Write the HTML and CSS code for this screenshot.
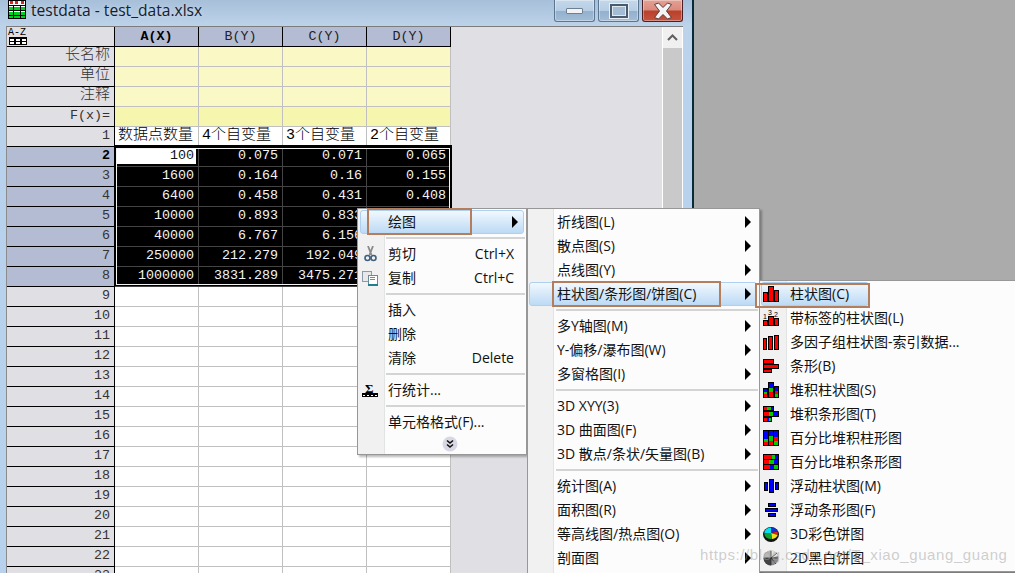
FILE: index.html
```html
<!DOCTYPE html>
<html lang="zh">
<head>
<meta charset="utf-8">
<title>testdata - test_data.xlsx</title>
<link rel="stylesheet" href="styles.css">
</head>
<body>
<div class="desktop">
  <div class="window">
    <header class="titlebar">
      <svg class="app-icon" width="20" height="20" viewBox="0 0 20 20" shape-rendering="crispEdges">
        <rect x="1" y="0" width="18" height="19" fill="#000"/>
        <rect x="2" y="1" width="16" height="17" fill="#fff"/>
        <rect x="3" y="1" width="3" height="3" fill="#e02020"/><rect x="8" y="1" width="3" height="3" fill="#e02020"/><rect x="14" y="1" width="3" height="3" fill="#e02020"/>
        <rect x="2" y="5" width="16" height="1" fill="#000"/>
        <rect x="2" y="7" width="16" height="3" fill="#00d020"/>
        <rect x="2" y="12" width="16" height="3" fill="#00d020"/>
        <rect x="2" y="16" width="16" height="2" fill="#00d020"/>
        <rect x="6" y="6" width="1" height="12" fill="#000"/><rect x="13" y="6" width="1" height="12" fill="#000"/>
        <rect x="2" y="10" width="16" height="1" fill="#000"/><rect x="2" y="15" width="16" height="1" fill="#000"/>
      </svg>
      <span class="title-text">testdata - test_data.xlsx</span>
      <div class="win-buttons">
        <div class="win-btn"><span class="glyph-min"></span></div>
        <div class="win-btn"><span class="glyph-max"></span></div>
        <div class="win-btn win-close">
          <svg width="20" height="18" viewBox="0 0 20 18"><path d="M1.500 2.500 L5.500 1 L10 5.500 L14.500 1 L18.500 2.500 L13.500 9 L18.500 15.500 L14.500 17 L10 12.500 L5.500 17 L1.500 15.500 L6.500 9 Z" fill="#f4f4f4" stroke="#5a3a3a" stroke-width="1"/></svg>
        </div>
      </div>
    </header>
    <main class="client">
      <div class="sheet">
        <div class="grid">
          <div class="cell col corner">
            <svg width="20" height="18" viewBox="0 0 20 18" shape-rendering="crispEdges">
              <text x="0" y="7" class="corner-text">A-Z</text>
              <rect x="1" y="9" width="18" height="8" fill="#000"/>
              <rect x="2" y="11" width="4" height="2" fill="#fff"/><rect x="8" y="11" width="4" height="2" fill="#fff"/><rect x="14" y="11" width="4" height="2" fill="#fff"/>
              <rect x="2" y="14" width="4" height="2" fill="#fff"/><rect x="8" y="14" width="4" height="2" fill="#fff"/><rect x="14" y="14" width="4" height="2" fill="#fff"/>
            </svg>
          </div>
          <div class="cell col bold">A(X)</div><div class="cell col">B(Y)</div><div class="cell col">C(Y)</div><div class="cell col">D(Y)</div>

          <div class="cell rh cjk">长名称</div><div class="cell yl"></div><div class="cell yl"></div><div class="cell yl"></div><div class="cell yl"></div>
          <div class="cell rh cjk">单位</div><div class="cell yl"></div><div class="cell yl"></div><div class="cell yl"></div><div class="cell yl"></div>
          <div class="cell rh cjk">注释</div><div class="cell yl"></div><div class="cell yl"></div><div class="cell yl"></div><div class="cell yl"></div>
          <div class="cell rh">F(x)=</div><div class="cell yl2"></div><div class="cell yl2"></div><div class="cell yl2"></div><div class="cell yl2"></div>
          <div class="cell rh">1</div><div class="cell wh cjk">数据点数量</div><div class="cell wh cjk">4个自变量</div><div class="cell wh cjk">3个自变量</div><div class="cell wh cjk">2个自变量</div>

          <div class="cell rh sel bold">2</div><div class="cell bk active">100</div><div class="cell bk">0.075</div><div class="cell bk">0.071</div><div class="cell bk">0.065</div>
          <div class="cell rh sel">3</div><div class="cell bk">1600</div><div class="cell bk">0.164</div><div class="cell bk">0.16</div><div class="cell bk">0.155</div>
          <div class="cell rh sel">4</div><div class="cell bk">6400</div><div class="cell bk">0.458</div><div class="cell bk">0.431</div><div class="cell bk">0.408</div>
          <div class="cell rh sel">5</div><div class="cell bk">10000</div><div class="cell bk">0.893</div><div class="cell bk">0.833</div><div class="cell bk"></div>
          <div class="cell rh sel">6</div><div class="cell bk">40000</div><div class="cell bk">6.767</div><div class="cell bk">6.156</div><div class="cell bk"></div>
          <div class="cell rh sel">7</div><div class="cell bk">250000</div><div class="cell bk">212.279</div><div class="cell bk">192.049</div><div class="cell bk"></div>
          <div class="cell rh sel">8</div><div class="cell bk">1000000</div><div class="cell bk">3831.289</div><div class="cell bk">3475.271</div><div class="cell bk"></div>

          <div class="cell rh">9</div><div class="cell wh"></div><div class="cell wh"></div><div class="cell wh"></div><div class="cell wh"></div>
          <div class="cell rh">10</div><div class="cell wh"></div><div class="cell wh"></div><div class="cell wh"></div><div class="cell wh"></div>
          <div class="cell rh">11</div><div class="cell wh"></div><div class="cell wh"></div><div class="cell wh"></div><div class="cell wh"></div>
          <div class="cell rh">12</div><div class="cell wh"></div><div class="cell wh"></div><div class="cell wh"></div><div class="cell wh"></div>
          <div class="cell rh">13</div><div class="cell wh"></div><div class="cell wh"></div><div class="cell wh"></div><div class="cell wh"></div>
          <div class="cell rh">14</div><div class="cell wh"></div><div class="cell wh"></div><div class="cell wh"></div><div class="cell wh"></div>
          <div class="cell rh">15</div><div class="cell wh"></div><div class="cell wh"></div><div class="cell wh"></div><div class="cell wh"></div>
          <div class="cell rh">16</div><div class="cell wh"></div><div class="cell wh"></div><div class="cell wh"></div><div class="cell wh"></div>
          <div class="cell rh">17</div><div class="cell wh"></div><div class="cell wh"></div><div class="cell wh"></div><div class="cell wh"></div>
          <div class="cell rh">18</div><div class="cell wh"></div><div class="cell wh"></div><div class="cell wh"></div><div class="cell wh"></div>
          <div class="cell rh">19</div><div class="cell wh"></div><div class="cell wh"></div><div class="cell wh"></div><div class="cell wh"></div>
          <div class="cell rh">20</div><div class="cell wh"></div><div class="cell wh"></div><div class="cell wh"></div><div class="cell wh"></div>
          <div class="cell rh">21</div><div class="cell wh"></div><div class="cell wh"></div><div class="cell wh"></div><div class="cell wh"></div>
          <div class="cell rh">22</div><div class="cell wh"></div><div class="cell wh"></div><div class="cell wh"></div><div class="cell wh"></div>
          <div class="cell rh">23</div><div class="cell wh"></div><div class="cell wh"></div><div class="cell wh"></div><div class="cell wh"></div>

          <div class="selection"></div>
        </div>
      </div>
      <div class="scrollbar">
        <div class="scroll-btn">
          <svg width="11" height="7" viewBox="0 0 11 7"><path d="M1 6 L5.500 1.500 L10 6" fill="none" stroke="#5f5f5f" stroke-width="2"/></svg>
        </div>
      </div>
    </main>
  </div>

  <!-- context menu -->
  <nav class="menu menu-a">
    <div class="item hot"><span class="icon"></span><span>绘图</span><span class="arrow"></span></div>
    <div class="sep"></div>
    <div class="item"><span class="icon">
      <svg width="16" height="16" viewBox="0 0 16 16"><path d="M6 0 L9.500 9 M11 0 L7.500 9" stroke="#8a8a8a" stroke-width="1.800" fill="none"/><circle cx="5.500" cy="12" r="2.500" fill="none" stroke="#3f5f7f" stroke-width="1.600"/><circle cx="11.500" cy="12" r="2.500" fill="none" stroke="#3f5f7f" stroke-width="1.600"/></svg>
    </span><span>剪切</span><span class="key">Ctrl+X</span></div>
    <div class="item"><span class="icon">
      <svg width="16" height="16" viewBox="0 0 16 16" shape-rendering="crispEdges"><rect x="0" y="1" width="9" height="10" fill="#e8e8e8" stroke="#8a9aa8"/><rect x="6" y="5" width="9" height="10" fill="#fff" stroke="#6a8a98"/><rect x="8" y="7" width="5" height="1" fill="#7a8a98"/><rect x="8" y="9" width="5" height="1" fill="#7a8a98"/><rect x="6" y="14" width="10" height="2" fill="#1f7f8f"/></svg>
    </span><span>复制</span><span class="key">Ctrl+C</span></div>
    <div class="sep"></div>
    <div class="item"><span class="icon"></span><span>插入</span></div>
    <div class="item"><span class="icon"></span><span>删除</span></div>
    <div class="item"><span class="icon"></span><span>清除</span><span class="key">Delete</span></div>
    <div class="sep"></div>
    <div class="item"><span class="icon">
      <svg width="16" height="16" viewBox="0 0 16 16" shape-rendering="crispEdges"><text x="3" y="11" class="sigma">Σ</text><rect x="0" y="11" width="16" height="1" fill="#000"/><rect x="0" y="12" width="16" height="3" fill="#000"/><rect x="1" y="13" width="2" height="1" fill="#fff"/><rect x="5" y="13" width="2" height="1" fill="#fff"/><rect x="9" y="13" width="2" height="1" fill="#fff"/><rect x="13" y="13" width="2" height="1" fill="#fff"/></svg>
    </span><span>行统计...</span></div>
    <div class="sep"></div>
    <div class="item"><span class="icon"></span><span>单元格格式(F)...</span></div>
    <div class="more">
      <svg width="16" height="16" viewBox="0 0 16 16"><circle cx="8" cy="8" r="7.500" fill="#d8d8e4"/><path d="M5 4.500 L8 7 L11 4.500 M5 8.500 L8 11 L11 8.500" fill="none" stroke="#111" stroke-width="1.600"/></svg>
    </div>
  </nav>

  <!-- plot submenu -->
  <nav class="menu menu-b">
    <div class="item"><span class="icon"></span><span>折线图(L)</span><span class="arrow"></span></div>
    <div class="item"><span class="icon"></span><span>散点图(S)</span><span class="arrow"></span></div>
    <div class="item"><span class="icon"></span><span>点线图(Y)</span><span class="arrow"></span></div>
    <div class="item hot"><span class="icon"></span><span>柱状图/条形图/饼图(C)</span><span class="arrow"></span></div>
    <div class="sep"></div>
    <div class="item"><span class="icon"></span><span>多Y轴图(M)</span><span class="arrow"></span></div>
    <div class="item"><span class="icon"></span><span>Y-偏移/瀑布图(W)</span><span class="arrow"></span></div>
    <div class="item"><span class="icon"></span><span>多窗格图(I)</span><span class="arrow"></span></div>
    <div class="sep"></div>
    <div class="item"><span class="icon"></span><span>3D XYY(3)</span><span class="arrow"></span></div>
    <div class="item"><span class="icon"></span><span>3D 曲面图(F)</span><span class="arrow"></span></div>
    <div class="item"><span class="icon"></span><span>3D 散点/条状/矢量图(B)</span><span class="arrow"></span></div>
    <div class="sep"></div>
    <div class="item"><span class="icon"></span><span>统计图(A)</span><span class="arrow"></span></div>
    <div class="item"><span class="icon"></span><span>面积图(R)</span><span class="arrow"></span></div>
    <div class="item"><span class="icon"></span><span>等高线图/热点图(O)</span><span class="arrow"></span></div>
    <div class="item"><span class="icon"></span><span>剖面图</span><span class="arrow"></span></div>
  </nav>

  <!-- column/bar submenu -->
  <nav class="menu menu-c">
    <div class="item hot hot-short"><span class="icon">
      <svg width="16" height="16" viewBox="0 0 16 16" shape-rendering="crispEdges"><rect x="0" y="6" width="5" height="10"/><rect x="5" y="0" width="6" height="16"/><rect x="11" y="4" width="5" height="12"/><rect x="1" y="7" width="3" height="8" fill="#f00"/><rect x="6" y="1" width="4" height="14" fill="#f00"/><rect x="12" y="5" width="3" height="10" fill="#f00"/></svg>
    </span><span>柱状图(C)</span></div>
    <div class="item"><span class="icon">
      <svg width="16" height="16" viewBox="0 0 16 16" shape-rendering="crispEdges"><text x="0" y="9" class="mini">1</text><text x="5" y="5" class="mini">3</text><text x="11" y="7" class="mini">2</text><rect x="0" y="10" width="5" height="6"/><rect x="5" y="6" width="6" height="10"/><rect x="11" y="8" width="5" height="8"/><rect x="1" y="11" width="3" height="4" fill="#f00"/><rect x="6" y="7" width="4" height="8" fill="#f00"/><rect x="12" y="9" width="3" height="6" fill="#f00"/></svg>
    </span><span>带标签的柱状图(L)</span></div>
    <div class="item"><span class="icon">
      <svg width="16" height="16" viewBox="0 0 16 16" shape-rendering="crispEdges"><rect x="0" y="4" width="4" height="12"/><rect x="5" y="2" width="5" height="14"/><rect x="11" y="1" width="5" height="15"/><rect x="1" y="5" width="2" height="10" fill="#f00"/><rect x="6" y="3" width="3" height="12" fill="#f00"/><rect x="12" y="2" width="3" height="13" fill="#f00"/></svg>
    </span><span>多因子组柱状图-索引数据...</span></div>
    <div class="item"><span class="icon">
      <svg width="16" height="16" viewBox="0 0 16 16" shape-rendering="crispEdges"><rect x="0" y="1" width="11" height="5"/><rect x="0" y="6" width="16" height="5"/><rect x="0" y="11" width="9" height="4"/><rect x="1" y="2" width="9" height="3" fill="#f00"/><rect x="1" y="7" width="14" height="3" fill="#f00"/><rect x="1" y="12" width="7" height="2" fill="#f00"/></svg>
    </span><span>条形(B)</span></div>
    <div class="item"><span class="icon">
      <svg width="16" height="16" viewBox="0 0 16 16" shape-rendering="crispEdges"><rect x="0" y="6" width="5" height="10"/><rect x="5" y="0" width="6" height="16"/><rect x="11" y="4" width="5" height="12"/><rect x="1" y="7" width="3" height="3" fill="#00f"/><rect x="1" y="10" width="3" height="2" fill="#0c0"/><rect x="1" y="12" width="3" height="3" fill="#f00"/><rect x="6" y="1" width="4" height="5" fill="#00f"/><rect x="6" y="6" width="4" height="4" fill="#0c0"/><rect x="6" y="10" width="4" height="5" fill="#f00"/><rect x="12" y="5" width="3" height="4" fill="#00f"/><rect x="12" y="9" width="3" height="3" fill="#f00"/><rect x="12" y="12" width="3" height="3" fill="#0c0"/></svg>
    </span><span>堆积柱状图(S)</span></div>
    <div class="item"><span class="icon">
      <svg width="16" height="16" viewBox="0 0 16 16" shape-rendering="crispEdges"><rect x="0" y="0" width="11" height="5"/><rect x="0" y="5" width="16" height="6"/><rect x="0" y="11" width="9" height="5"/><rect x="1" y="1" width="3" height="3" fill="#f00"/><rect x="4" y="1" width="4" height="3" fill="#0c0"/><rect x="8" y="1" width="2" height="3" fill="#00f"/><rect x="1" y="6" width="5" height="4" fill="#f00"/><rect x="6" y="6" width="4" height="4" fill="#0c0"/><rect x="10" y="6" width="5" height="4" fill="#00f"/><rect x="1" y="12" width="3" height="3" fill="#f00"/><rect x="4" y="12" width="2" height="3" fill="#00f"/><rect x="6" y="12" width="2" height="3" fill="#0c0"/></svg>
    </span><span>堆积条形图(T)</span></div>
    <div class="item"><span class="icon">
      <svg width="16" height="16" viewBox="0 0 16 16" shape-rendering="crispEdges"><rect x="0" y="0" width="16" height="16"/><rect x="1" y="1" width="4" height="8" fill="#00f"/><rect x="1" y="9" width="4" height="3" fill="#0c0"/><rect x="1" y="12" width="4" height="3" fill="#f00"/><rect x="6" y="1" width="4" height="5" fill="#00f"/><rect x="6" y="6" width="4" height="5" fill="#0c0"/><rect x="6" y="11" width="4" height="4" fill="#f00"/><rect x="11" y="1" width="4" height="6" fill="#00f"/><rect x="11" y="7" width="4" height="4" fill="#f00"/><rect x="11" y="11" width="4" height="4" fill="#0c0"/></svg>
    </span><span>百分比堆积柱形图</span></div>
    <div class="item"><span class="icon">
      <svg width="16" height="16" viewBox="0 0 16 16" shape-rendering="crispEdges"><rect x="0" y="0" width="16" height="16"/><rect x="1" y="1" width="8" height="4" fill="#f00"/><rect x="9" y="1" width="3" height="4" fill="#0c0"/><rect x="12" y="1" width="3" height="4" fill="#00f"/><rect x="1" y="6" width="5" height="4" fill="#f00"/><rect x="6" y="6" width="5" height="4" fill="#0c0"/><rect x="11" y="6" width="4" height="4" fill="#00f"/><rect x="1" y="11" width="6" height="4" fill="#f00"/><rect x="7" y="11" width="4" height="4" fill="#00f"/><rect x="11" y="11" width="4" height="4" fill="#0c0"/></svg>
    </span><span>百分比堆积条形图</span></div>
    <div class="item"><span class="icon">
      <svg width="16" height="16" viewBox="0 0 16 16" shape-rendering="crispEdges"><rect x="1" y="4" width="4" height="9"/><rect x="6" y="1" width="5" height="14"/><rect x="12" y="4" width="4" height="8"/><rect x="2" y="5" width="2" height="7" fill="#00f"/><rect x="7" y="2" width="3" height="12" fill="#00f"/><rect x="13" y="5" width="2" height="6" fill="#00f"/></svg>
    </span><span>浮动柱状图(M)</span></div>
    <div class="item"><span class="icon">
      <svg width="16" height="16" viewBox="0 0 16 16" shape-rendering="crispEdges"><rect x="5" y="1" width="8" height="4"/><rect x="2" y="6" width="13" height="4"/><rect x="5" y="11" width="8" height="4"/><rect x="6" y="2" width="6" height="2" fill="#00f"/><rect x="3" y="7" width="11" height="2" fill="#00f"/><rect x="6" y="12" width="6" height="2" fill="#00f"/></svg>
    </span><span>浮动条形图(F)</span></div>
    <div class="item"><span class="icon">
      <svg width="16" height="16" viewBox="0 0 16 16"><ellipse cx="8" cy="8.500" rx="8" ry="7.500" fill="#111"/><path d="M8 7 L8 1.500 A6.800 5.500 0 0 0 1.300 7.500 Z" fill="#00e0f0"/><path d="M8 7 L8 1.500 A6.800 5.500 0 0 1 14.500 5.500 Z" fill="#1030d0"/><path d="M8 7 L14.500 5.500 A6.800 5.500 0 0 1 14.700 9 Z" fill="#e02020"/><path d="M8 7 L14.700 9 A6.800 5.500 0 0 1 9 13 Z" fill="#f0e020"/><path d="M8 7 L9 13 A6.800 5.500 0 0 1 1.300 7.500 Z" fill="#10a030"/></svg>
    </span><span>3D彩色饼图</span></div>
    <div class="item"><span class="icon">
      <svg width="16" height="16" viewBox="0 0 16 16"><circle cx="8" cy="8" r="7.500" fill="#8a8a8a"/><path d="M8 8 L8 .5 A7.500 7.500 0 0 1 15 6 Z" fill="#e4e4e4"/><path d="M8 8 L.5 8 A7.500 7.500 0 0 1 8 .5 Z" fill="#b8b8b8"/><path d="M8 8 L8 15.500 A7.500 7.500 0 0 1 .5 8 Z" fill="#444"/><path d="M8 1 V15 M1 8 H15 M8 8 L14 3 M8 8 L13 14" stroke="#222" stroke-width=".7"/></svg>
    </span><span>2D黑白饼图</span></div>
  </nav>

  <div class="mark mark-a"></div>
  <div class="mark mark-b"></div>
  <div class="mark mark-c"></div>
  <div class="watermark">https://blog.csdn.net/T_xiao_guang_guang</div>
</div>
</body>
</html>
```
FILE: styles.css
```css
* { box-sizing: border-box; }
html, body { margin: 0; padding: 0; }
body { width: 1015px; height: 573px; overflow: hidden; background: #ababab; }

.desktop { position: relative; width: 1015px; height: 573px; overflow: hidden; background: #ababab; }

/* window */
.window {
  width: 694px; height: 573px;
  display: flex; flex-direction: column;
  background: linear-gradient(#a7bfd9 0, #bcd3ea 26px, #b8d2ed 120px);
  border-right: 2px solid #062c3a;
}
.titlebar { height: 26px; display: flex; align-items: flex-start; flex: none; }
.app-icon { margin: 0 0 0 7px; flex: none; }
.title-text {
  margin: 0 0 0 4px;
  font: 15.6px/20px "Open Sans", "Liberation Sans", sans-serif;
  color: #15202c;
  text-shadow: 0 0 5px rgba(255,255,255,.45);
}
.win-buttons { margin-left: auto; margin-right: 9px; display: flex; gap: 3px; }
.win-btn {
  width: 41px; height: 22px;
  display: flex; align-items: center; justify-content: center;
  border: 1px solid #5d7690; border-top: 0; border-radius: 0 0 3px 3px;
  background: linear-gradient(#c5d8eb 0, #b5cde4 50%, #92afcc 52%, #a3bdd7 100%);
  box-shadow: inset 0 0 0 1px rgba(255,255,255,.35);
}
.win-close {
  border-color: #4b1f26;
  background: linear-gradient(#e5a094 0, #d98a7c 48%, #b9402a 52%, #c5533f 100%);
}
.glyph-min { width: 17px; height: 6px; margin-top: 1px; border-radius: 1px; background: #f2f2f2; border: 1px solid #6f7f92; }
.glyph-max { width: 18px; height: 14px; border: 2px solid #4a5a6e; box-shadow: 0 0 0 1px #e8eef4, inset 0 0 0 1px #dfe7ef; background: #a3bbd3; }

.client {
  flex: 1; min-height: 0;
  margin: 0 9px 0 6px;
  display: flex;
  background: #e0dfe3;
  border-top: 1px solid #7c7c7c;
  border-left: 1px solid #8c8c8c;
}
.sheet { flex: 1; min-width: 0; overflow: hidden; }

/* worksheet */
.grid {
  position: relative;
  display: grid;
  grid-template-columns: 108px repeat(4, 84px);
  grid-auto-rows: 20px;
  width: 444px;
  font: 13.33px/18px "Liberation Mono", "Noto Sans CJK SC", monospace;
  color: #111;
}
.cell {
  display: block;
  padding-right: 4px;
  text-align: right;
  white-space: nowrap;
  overflow: hidden;
  border-right: 1px solid #c0c0c0;
  border-bottom: 1px solid #c0c0c0;
}
.col { background: #b4bcd4; text-align: center; padding-right: 0; border-color: #000; color: #222; line-height: 19px; }
.corner { background: #e0dfe3; text-align: left; padding-left: 1px; overflow: visible; }
.corner svg { display: block; margin-top: 1px; overflow: visible; }
.corner-text { font: 10px "Liberation Mono", monospace; fill: #000; }
.bold { font-weight: bold; color: #000; }
.rh { background: #e0dfe3; border-color: #000; color: #333; }
.rh.sel { background: #b4bcd4; }
.rh.bold { color: #000; }
.cjk { font-size: 15px; font-weight: 300; }
.yl { background: #faf8c4; }
.yl2 { background: #f7f6ae; }
.wh { background: #fff; text-align: left; padding: 0 0 0 3px; color: #000; }
.bk { background: #000; color: #f4f4f4; border-color: #444; }
.active { background: #fff; color: #111; box-shadow: inset 0 0 0 2px #000; }
.selection {
  position: absolute;
  grid-column: 2 / 6;
  grid-row: 7 / 14;
  top: 1px; left: 1px; right: 1px; bottom: 2px;
  border: 1px solid #f4f4f4;
  box-shadow: 0 -1px 0 2px #000;
  pointer-events: none;
}

/* scrollbar */
.scrollbar {
  width: 21px; flex: none;
  background: #c9c9c9;
  border-left: 1px solid #fff;
  border-right: 1px solid #fff;
}
.scroll-btn { height: 21px; background: #f0f0f0; display: flex; align-items: center; justify-content: center; }

/* menus */
.menu {
  position: absolute;
  border: 1px solid #979797;
  padding: 1px;
  box-shadow: 2px 2px 2px rgba(0,0,0,.28);
  font: 14px/24px "Open Sans", "Noto Sans CJK SC", sans-serif;
  color: #111;
  background: #fcfcfc;
}
.menu::before {
  content: "";
  position: absolute;
  top: 0; bottom: 0; left: 0;
  background: #f1f1f1;
  border-right: 1px solid #e2e3e3;
}
.menu > * { position: relative; }
.menu-a { left: 357px; top: 208px; width: 170px; height: 247px; }
.menu-a::before { width: 26px; }
.menu-b { left: 527px; top: 208px; width: 233px; height: 380px; }
.menu-b::before { width: 25px; }
.menu-c { left: 759px; top: 280px; width: 260px; }
.menu-c::before { width: 26px; }

.item {
  height: 24px;
  margin: 0 1px;
  padding-right: 5px;
  display: flex; align-items: center;
  border: 1px solid transparent;
  white-space: nowrap;
  line-height: 22px;
}
.menu-b .item, .menu-c .item { margin-left: 0; }
.hot {
  border: 1px solid #aecff0;
  border-radius: 3px;
  background: linear-gradient(#f2f8fe, #bcdaf5);
}
.menu-c .hot-short { width: 108px; }
.icon { width: 27px; flex: none; display: flex; align-items: center; height: 16px; }
.icon svg { margin-left: 1px; flex: none; }
.menu-c .icon { width: 28px; }
.arrow {
  margin-left: auto;
  width: 0; height: 0;
  border-left: 6px solid #000;
  border-top: 6px solid transparent;
  border-bottom: 6px solid transparent;
}
.key { margin-left: auto; padding-right: 4px; }
.sep { height: 8px; margin-left: 27px; }
.sep::after { content: ""; display: block; position: relative; top: 3px; height: 2px; background: #d4d4d4; }
.more { height: 18px; display: flex; justify-content: center; padding: 2px 0 0 15px; }
.sigma { font: bold 13px "Liberation Serif", serif; fill: #000; }
.mini { font: 7px "Liberation Sans", sans-serif; fill: #000; }

/* callout rectangles */
.mark { position: absolute; border: 2px solid #b47d5c; }
.mark-a { left: 367px; top: 208px; width: 105px; height: 27px; }
.mark-b { left: 552px; top: 281px; width: 169px; height: 26px; }
.mark-c { left: 755px; top: 283px; width: 115px; height: 25px; }

.watermark {
  position: absolute;
  left: 700px; top: 546px;
  font: 15px/18px "Liberation Sans", sans-serif;
  letter-spacing: .6px;
  color: rgba(160,160,160,.5);
  white-space: nowrap;
}
```
